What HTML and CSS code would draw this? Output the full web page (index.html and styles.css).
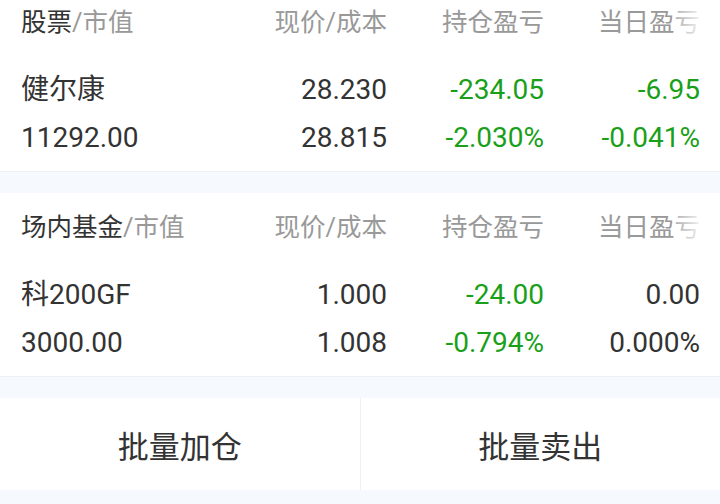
FILE: index.html
```html
<!DOCTYPE html>
<html lang="zh">
<head>
<meta charset="utf-8">
<link rel="stylesheet" href="styles.css">
</head>
<body>
<div class="page">
  <section class="block first">
    <div class="row head">
      <div class="c1"><span class="dark">股票</span>/市值</div>
      <div class="c2">现价/成本</div>
      <div class="c3">持仓盈亏</div>
      <div class="c4">当日盈亏<span class="fade"></span></div>
    </div>
    <div class="rows">
      <div class="row">
        <div class="c1">健尔康</div>
        <div class="c2">28.230</div>
        <div class="c3 green">-234.05</div>
        <div class="c4 green">-6.95</div>
      </div>
      <div class="row">
        <div class="c1">11292.00</div>
        <div class="c2">28.815</div>
        <div class="c3 green">-2.030%</div>
        <div class="c4 green">-0.041%</div>
      </div>
    </div>
  </section>
  <div class="band"></div>
  <section class="block">
    <div class="row head">
      <div class="c1"><span class="dark">场内基金</span>/市值</div>
      <div class="c2">现价/成本</div>
      <div class="c3">持仓盈亏</div>
      <div class="c4">当日盈亏<span class="fade"></span></div>
    </div>
    <div class="rows">
      <div class="row">
        <div class="c1">科200GF</div>
        <div class="c2">1.000</div>
        <div class="c3 green">-24.00</div>
        <div class="c4">0.00</div>
      </div>
      <div class="row">
        <div class="c1">3000.00</div>
        <div class="c2">1.008</div>
        <div class="c3 green">-0.794%</div>
        <div class="c4">0.000%</div>
      </div>
    </div>
  </section>
  <div class="band"></div>
  <div class="actions">
    <div class="btn">批量加仓</div>
    <div class="sep"></div>
    <div class="btn">批量卖出</div>
  </div>
  <div class="band tail"></div>
</div>
</body>
</html>
```
FILE: styles.css
```css
* { box-sizing: border-box; }
html, body {
  margin: 0;
  padding: 0;
  background: #f6f9fd;
  font-family: Roboto, "Noto Sans CJK SC", sans-serif;
  color: #333;
}
.page {
  width: 720px;
  height: 504px;
  overflow: hidden;
  background: #f6f9fd;
}
.block {
  background: #fff;
  padding: 12px 20px 11px 21px;
  border-bottom: 1px solid #eef0f3;
  height: 184px;
}
.block.first {
  padding-top: 0;
  height: 172px;
}
.row {
  display: grid;
  grid-template-columns: 1fr 146px 157px 156px;
  align-items: center;
  height: 44px;
  font-size: 28px;
  line-height: 44px;
  white-space: nowrap;
}
.row .c2, .row .c3, .row .c4 { text-align: right; }
.head {
  font-size: 25.5px;
  color: #999;
  margin-bottom: 24px;
}
.head .dark { color: #333; }
.head .c4 {
  position: relative;
  text-align: right;
}
.fade {
  position: absolute;
  right: -4px;
  top: 0;
  width: 30px;
  height: 44px;
  background: linear-gradient(to right, rgba(255,255,255,0.2), rgba(255,255,255,0.95));
}
.rows {
  display: flex;
  flex-direction: column;
  gap: 4px;
}
.green { color: #1a9f1a; }
.band { height: 21px; background: #f6f9fd; }
.actions {
  display: flex;
  height: 92px;
  background: #fff;
  align-items: stretch;
}
.btn {
  flex: 1;
  display: flex;
  align-items: center;
  justify-content: center;
  font-family: "Noto Sans CJK SC", sans-serif;
  font-size: 31px;
  color: #333;
}
.sep {
  width: 1px;
  background: #f0f0f0;
}
.tail { height: 14px; }
```
